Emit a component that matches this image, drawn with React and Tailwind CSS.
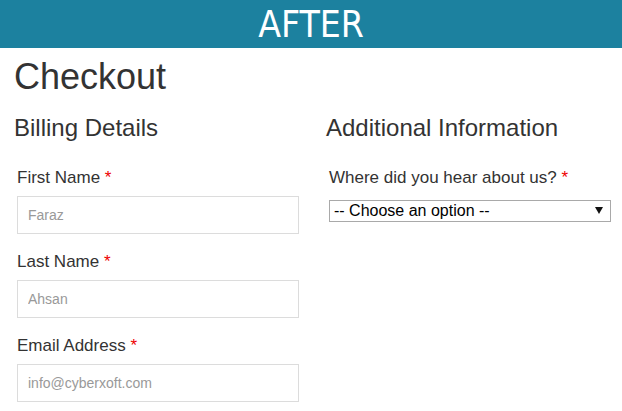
import React from "react";

const fields = [
  { label: "First Name", placeholder: "Faraz" },
  { label: "Last Name", placeholder: "Ahsan" },
  { label: "Email Address", placeholder: "info@cyberxoft.com" },
];

function Field({ label, placeholder }) {
  return (
    <div className="flex flex-col px-[3px] pb-[18px]">
      <label className="text-[17px] leading-[20px] text-[#333]">
        {label} <span className="text-[#e00]">*</span>
      </label>
      <input
        type="text"
        placeholder={placeholder}
        className="mt-[8px] h-[38px] w-[282px] border border-[#dcdcdc] bg-white px-[10px] text-[14px] text-[#333] outline-none placeholder:text-[#999]"
      />
    </div>
  );
}

export default function App() {
  return (
    <div className="min-h-[411px] bg-white font-['Liberation_Sans',Arial,sans-serif]">
      <div className="flex h-[48px] items-center justify-center bg-[#1c819f]">
        <span className="font-['Liberation_Sans_Narrow','DejaVu_Sans_Condensed','Open_Sans',sans-serif] text-[37px] leading-none text-white [font-stretch:condensed]">
          AFTER
        </span>
      </div>

      <div className="px-[14px]">
        <h1 className="mt-[9px] text-[36px] leading-[40px] text-[#333]">Checkout</h1>

        <div className="mt-[18px] flex gap-[24px]">
          <div className="w-[288px]">
            <h3 className="text-[24px] leading-[26px] text-[#333]">Billing Details</h3>
            <div className="mt-[27px]">
              {fields.map((f) => (
                <Field key={f.label} {...f} />
              ))}
            </div>
          </div>

          <div className="w-[288px]">
            <h3 className="text-[24px] leading-[26px] text-[#333]">Additional Information</h3>
            <div className="mt-[27px] flex flex-col px-[3px]">
              <label className="text-[17px] leading-[20px] text-[#333]">
                Where did you hear about us? <span className="text-[#e00]">*</span>
              </label>
              <div className="relative mt-[11px] w-[282px]">
                <select className="h-[22px] w-full appearance-none rounded-none border border-[#a9a9a9] bg-white pl-[4px] text-[16px] leading-[20px] text-black outline-none">
                  <option>-- Choose an option --</option>
                </select>
                <svg
                  className="pointer-events-none absolute right-[8px] top-[8px]"
                  width="8"
                  height="7"
                  viewBox="0 0 8 7"
                >
                  <path d="M0 0h8L4 7z" fill="#111" />
                </svg>
              </div>
            </div>
          </div>
        </div>
      </div>
    </div>
  );
}
